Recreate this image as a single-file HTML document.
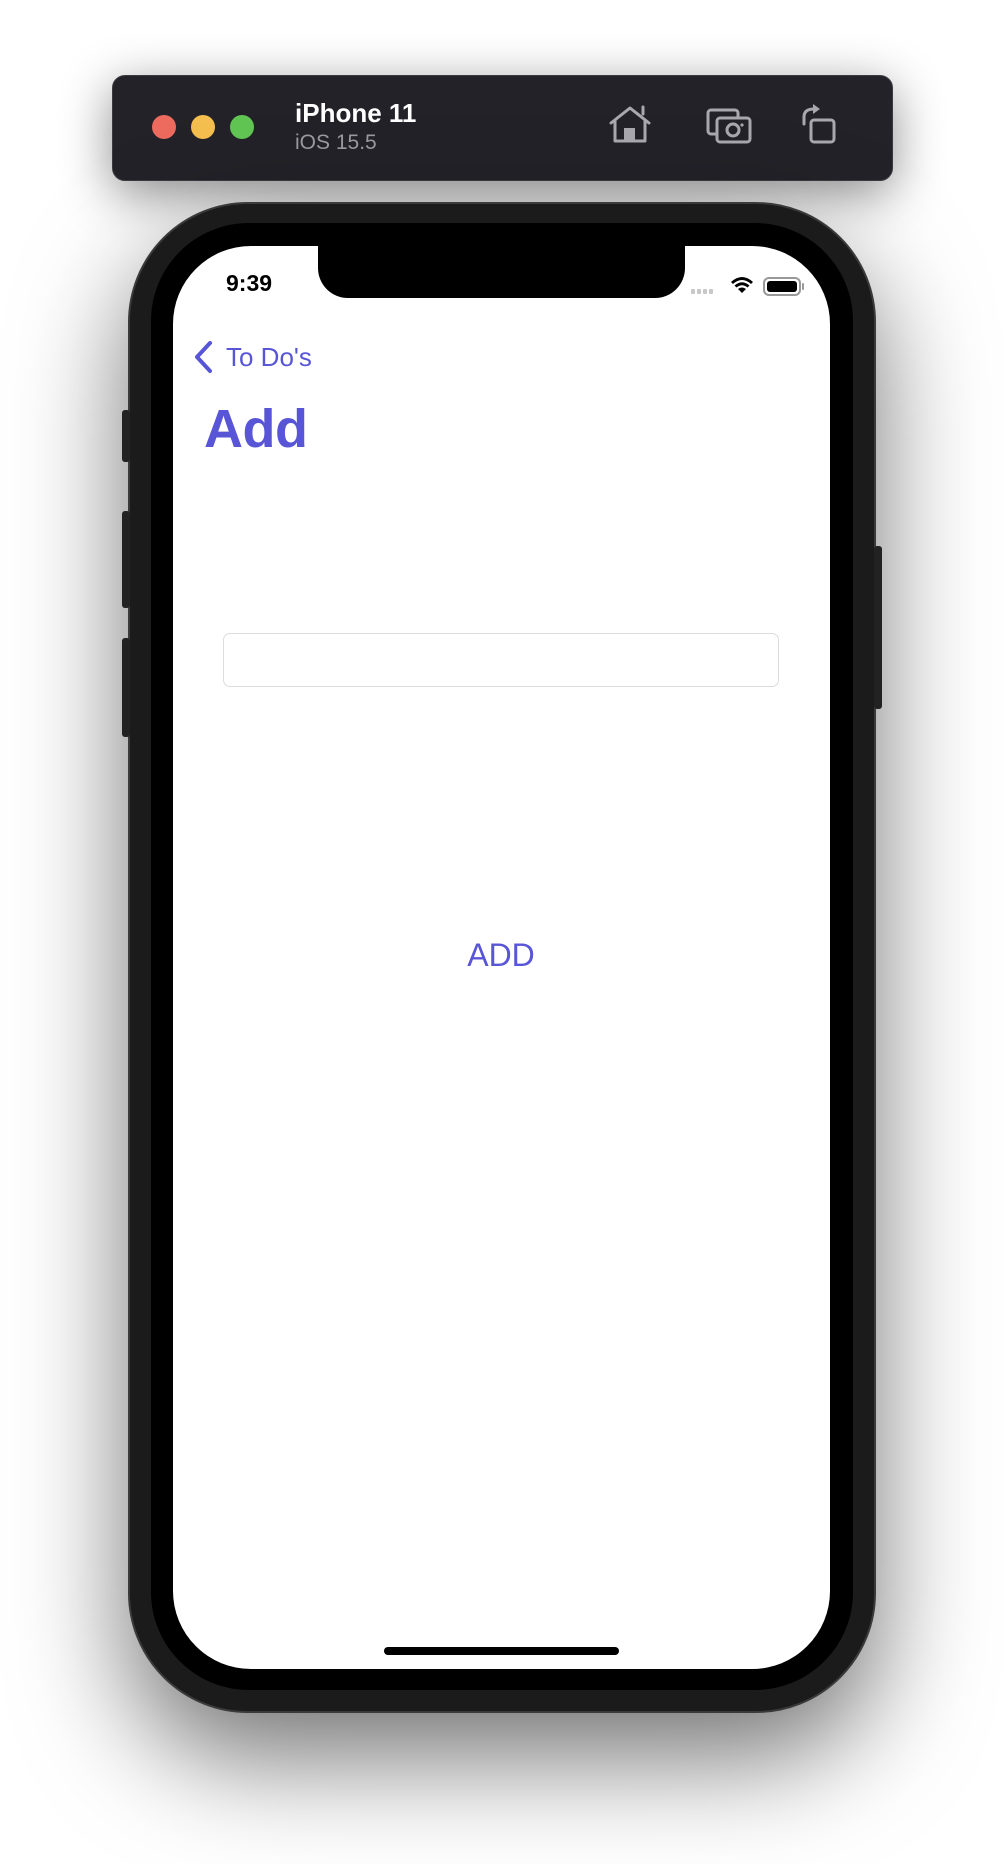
<!DOCTYPE html>
<html><head><meta charset="utf-8"><style>
*{margin:0;padding:0;box-sizing:border-box}
body{width:1004px;height:1864px;background:#fff;position:relative;overflow:hidden;font-family:"Liberation Sans",sans-serif}
.abs{position:absolute}
</style></head><body>
<!-- toolbar -->
<div class="abs" style="left:112px;top:75px;width:781px;height:106px;background:#232228;border-radius:13px;box-shadow:0 12px 50px rgba(0,0,0,0.45);border:1px solid #3a3a40"></div>
<div class="abs" style="left:152px;top:115px;width:24px;height:24px;border-radius:50%;background:#ec6a5e"></div>
<div class="abs" style="left:191px;top:115px;width:24px;height:24px;border-radius:50%;background:#f4bf4f"></div>
<div class="abs" style="left:230px;top:115px;width:24px;height:24px;border-radius:50%;background:#61c554"></div>
<div class="abs" style="left:295px;top:98px;color:#fff;font-size:26px;font-weight:bold">iPhone 11</div>
<div class="abs" style="left:295px;top:131px;color:#9a9aa0;font-size:21px">iOS 15.5</div>
<svg class="abs" style="left:600px;top:100px" width="250" height="50" viewBox="600 100 250 50">
<g fill="none" stroke="#a9a8ae" stroke-width="3" stroke-linejoin="round" stroke-linecap="round">
<path d="M611 123 L630 108 L649 123 M615 120 V141 H645 V120 M643 114 V107"/>
<rect x="708" y="110" width="30" height="24" rx="3"/>
<rect x="717" y="118" width="33" height="24" rx="3" fill="#232228"/>
<circle cx="733" cy="130" r="6"/>
<rect x="811" y="120" width="23" height="22" rx="3"/>
<path d="M804 124 V117 Q804 109 814 109"/>
</g>
<rect x="624" y="128" width="11" height="13" fill="#a9a8ae"/>
<path d="M813 104 L820 109 L813 114 Z" fill="#a9a8ae"/>
<circle cx="742" cy="125" r="1.6" fill="#a9a8ae"/>
</svg>
<!-- phone shadow and frame -->
<div class="abs" style="left:128px;top:202px;width:748px;height:1511px;border-radius:120px;background:#1b1b1b;box-shadow:0 45px 110px rgba(0,0,0,0.55);border:2px solid #3a3a3a"></div>
<div class="abs" style="left:122px;top:410px;width:8px;height:52px;background:#222;border-radius:3px"></div>
<div class="abs" style="left:122px;top:511px;width:8px;height:97px;background:#222;border-radius:3px"></div>
<div class="abs" style="left:122px;top:638px;width:8px;height:99px;background:#222;border-radius:3px"></div>
<div class="abs" style="left:874px;top:546px;width:8px;height:163px;background:#222;border-radius:3px"></div>
<div class="abs" style="left:151px;top:223px;width:702px;height:1467px;border-radius:98px;background:#000"></div>
<div class="abs" style="left:173px;top:246px;width:657px;height:1423px;border-radius:78px;background:#fff;overflow:hidden">
  <div class="abs" style="left:145px;top:-5px;width:367px;height:57px;background:#000;border-radius:0 0 30px 30px"></div>
</div>
<!-- status bar -->
<div class="abs" style="left:226px;top:270px;font-size:23px;font-weight:bold;color:#000">9:39</div>
<svg class="abs" style="left:690px;top:272px" width="116" height="26" viewBox="0 0 116 26">
<g fill="#c8c8c8"><rect x="1" y="17" width="4" height="5" rx="1"/><rect x="7" y="17" width="4" height="5" rx="1"/><rect x="13" y="17" width="4" height="5" rx="1"/><rect x="19" y="17" width="4" height="5" rx="1"/></g>
<path d="M52 21 L56 17 Q52 14 48 17 Z M44.5 13.5 Q52 7 59.5 13.5 L57.5 15.5 Q52 11 46.5 15.5 Z M41 10 Q52 0 63 10 L61 12 Q52 4 43 12 Z" fill="#000"/>
<rect x="74" y="6" width="36" height="17" rx="5" fill="none" stroke="#999" stroke-width="2"/>
<rect x="77" y="9" width="30" height="11" rx="3" fill="#000"/>
<rect x="112" y="11" width="2" height="7" rx="1" fill="#999"/>
</svg>
<!-- nav -->
<svg class="abs" style="left:192px;top:340px" width="24" height="34"><path d="M18 3 L5 17 L18 31" fill="none" stroke="#5856d6" stroke-width="4" stroke-linecap="round" stroke-linejoin="round"/></svg>
<div class="abs" style="left:226px;top:342px;font-size:26px;color:#5856d6">To Do's</div>
<div class="abs" style="left:204px;top:398px;font-size:54px;font-weight:bold;color:#5856d6;letter-spacing:-0.5px">Add</div>
<div class="abs" style="left:223px;top:633px;width:556px;height:54px;border:1.5px solid #dcdcdc;border-radius:7px"></div>
<div class="abs" style="left:401px;top:937px;width:200px;text-align:center;font-size:32px;color:#5856d6">ADD</div>
<div class="abs" style="left:384px;top:1647px;width:235px;height:8px;border-radius:4px;background:#000"></div>
</body></html>
